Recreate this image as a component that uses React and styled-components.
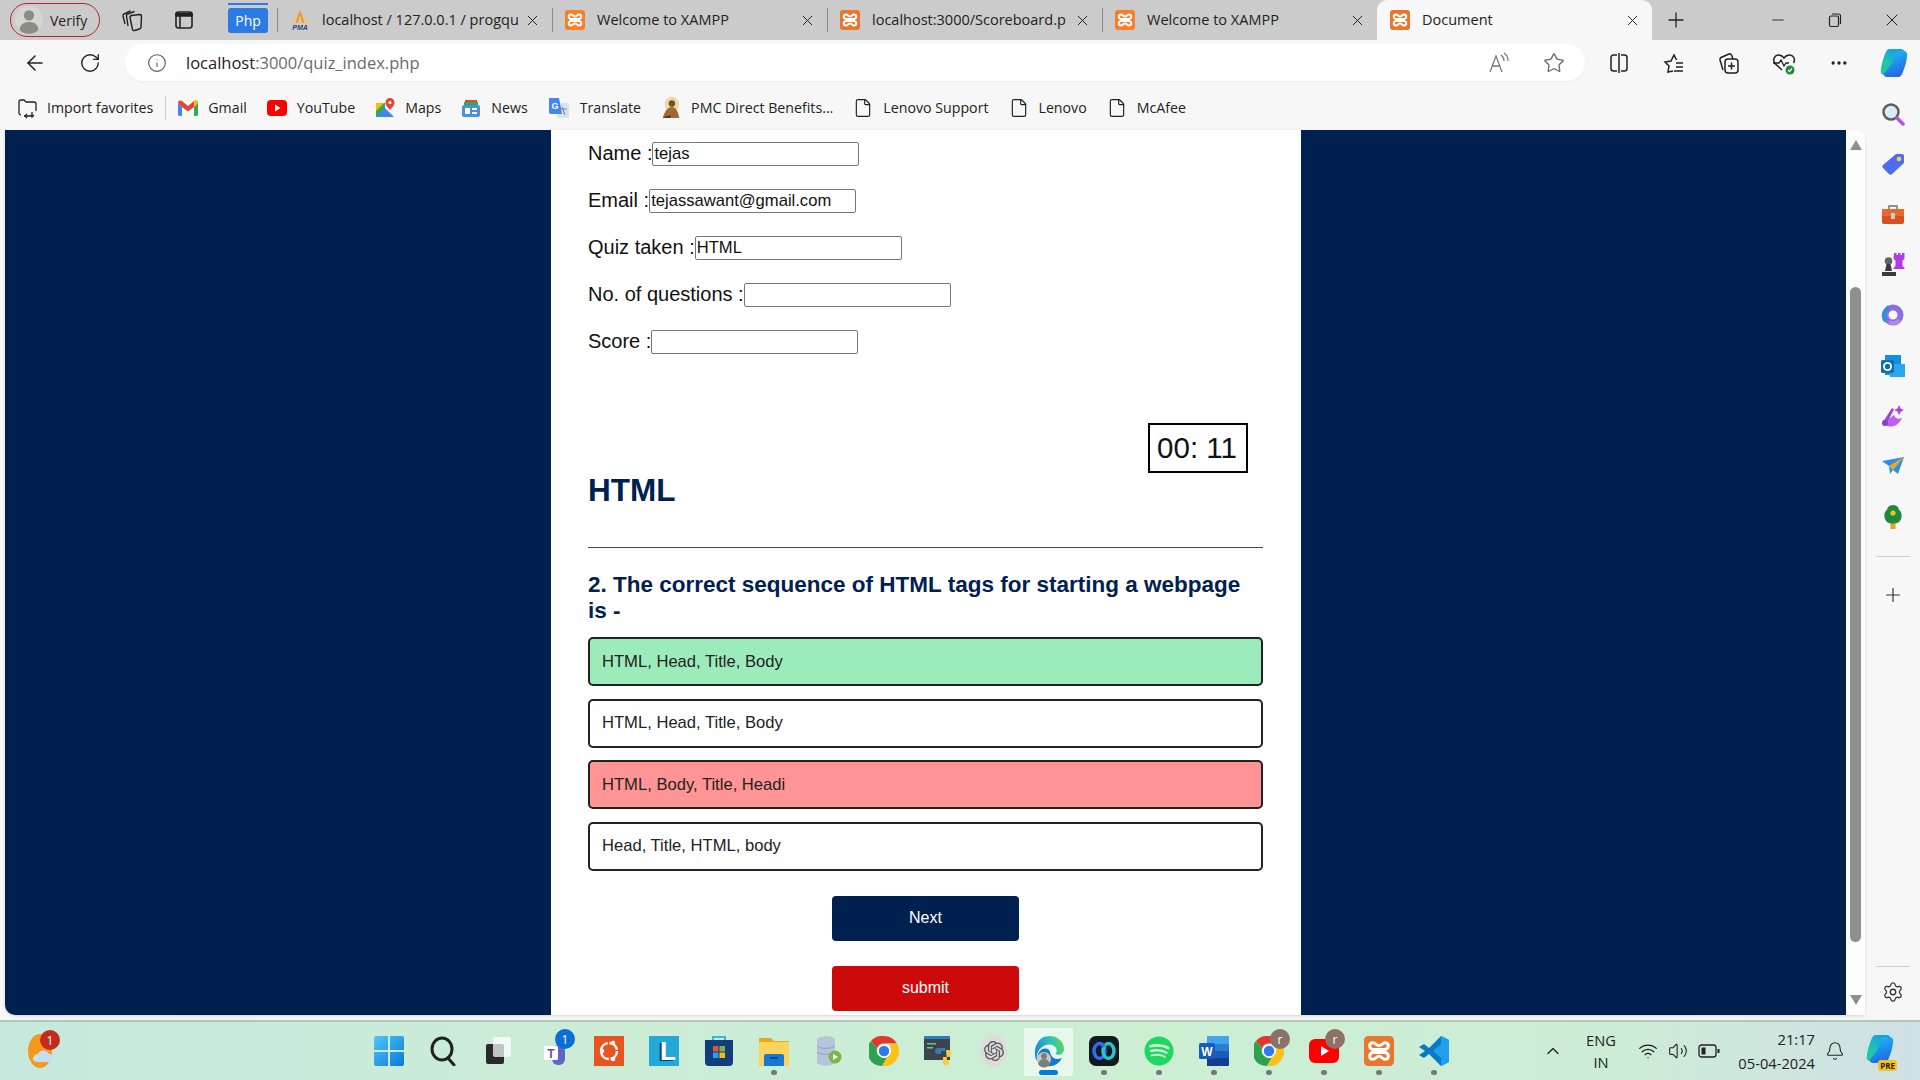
import React from 'react';
import styled, { createGlobalStyle } from 'styled-components';
import {
  ArrowLeft, RotateCw, Info, Star, X, Plus, Minus, Ellipsis, Settings, ChevronUp, Wifi, Volume2, Bell, File,
} from 'lucide-react';
import { SiOpenai } from 'react-icons/si';
import { FaSpotify } from 'react-icons/fa';

const NAVY = '#002050';

const GlobalStyle = createGlobalStyle`
  html, body { margin: 0; padding: 0; height: 100%; overflow: hidden; }
  * { box-sizing: border-box; }
  body { font-family: "Open Sans", "Liberation Sans", sans-serif; }
`;

const OpenAiDisc = styled.div`
  width: 26px;
  height: 32px;
  display: flex;
  align-items: center;
  justify-content: center;
  border-radius: 50%;
  background: #dcdcdc;
`;

/* ---------- little drawn icons ---------- */

const Xampp = ({ size = 20, dim }) => (
  <svg width={size} height={size} viewBox="0 0 20 20">
    <rect width="20" height="20" rx="3" fill={dim ? '#e8762c' : '#fb7d24'} />
    <path d="M6 4.500c-3 0-3 4 0 4.500h8c3-.5 3-4.500 0-4.500-2 0-2 2-4 2s-2-2-4-2zM6 15.500c-3 0-3-4 0-4.500h8c3 .5 3 4.500 0 4.500-2 0-2-2-4-2s-2 2-4 2z" fill="none" stroke="#fff" strokeWidth="2" />
  </svg>
);

const Pma = () => (
  <svg width="20" height="22" viewBox="0 0 20 22">
    <path d="M10 1 5 14h3l2-8 2 8h3z" fill="#f29a1f" />
    <path d="M3 14 7 6l-1 8zM17 14l-4-8 1 8z" fill="#f7c26b" />
    <text x="10" y="21" fontSize="7" fontWeight="700" fontStyle="italic" textAnchor="middle" fill="#2f3f7f" fontFamily="Liberation Sans">PMA</text>
  </svg>
);

const Profile = () => (
  <svg width="30" height="32" viewBox="0 0 32 32">
    <circle cx="16" cy="16" r="15" fill="#d6d6d0" />
    <circle cx="16" cy="11" r="5.500" fill="#8d8d88" />
    <path d="M6 27c0-7 5-9 10-9s10 2 10 9a15 15 0 0 1-20 0z" fill="#8d8d88" />
  </svg>
);

const Collections = () => (
  <svg width="24" height="24" viewBox="0 0 24 24" fill="none" stroke="#222" strokeWidth="1.400">
    <path d="M11 7.500 20 6.500a1.500 1.500 0 0 1 1.500 1.500l-.5 11a2 2 0 0 1-1.500 2l-5 1.500c-1 .3-1.700-.2-2-1l-2.500-12c-.2-1 .2-1.500 1-1.500z" />
    <path d="M8 18 6.500 8c-.2-1 .3-1.700 1-2l7-2.500" />
    <path d="M5 16 3 8c-.2-1 .2-1.700 1-2l6.500-3" />
  </svg>
);

const VerticalTabs = () => (
  <svg width="22" height="22" viewBox="0 0 22 22" fill="none" stroke="#222" strokeWidth="1.600">
    <rect x="3" y="3" width="16" height="16" rx="2.500" />
    <path d="M3 4.500h16V7H3z" fill="#222" />
    <path d="M7 7v12" />
  </svg>
);

const Restore = () => (
  <svg width="16" height="16" viewBox="0 0 16 16" fill="none" stroke="#222" strokeWidth="1.200">
    <rect x="2.500" y="4" width="9" height="10.500" rx="1.500" />
    <path d="M5 2h6.500A2 2 0 0 1 13.500 4v8" />
  </svg>
);

const ReadAloud = () => (
  <svg width="24" height="24" viewBox="0 0 24 24" fill="none" stroke="#7a7a7a" strokeWidth="1.300">
    <path d="M4 21 10 5l6 16M6.500 15h7" />
    <path d="M15 4c2 1.500 3 3.500 3 6M18 2c3 2 4 5 4 8" />
  </svg>
);

const SplitScreen = () => (
  <svg width="22" height="22" viewBox="0 0 22 22" fill="none" stroke="#222" strokeWidth="1.500">
    <path d="M9 3H5.500A2.500 2.500 0 0 0 3 5.500v11A2.500 2.500 0 0 0 5.500 19H9M13 3h3.500A2.500 2.500 0 0 1 19 5.500v11a2.500 2.500 0 0 1-2.500 2.500H13M11 1v20" />
  </svg>
);

const Favourites = () => (
  <svg width="24" height="24" viewBox="0 0 24 24" fill="none" stroke="#222" strokeWidth="1.500">
    <path d="M11 20 6 21l1-6-4-4 6-1 3-6 2.500 5" />
    <path d="M14 12h7M14 16h7M12 20h9" />
  </svg>
);

const CollectionsAdd = () => (
  <svg width="24" height="24" viewBox="0 0 24 24" fill="none" stroke="#222" strokeWidth="1.500">
    <rect x="8" y="8" width="13" height="14" rx="3" />
    <path d="M14.500 11.500v7M11 15h7M6 19 3 9c-.3-1 .2-2 1-2.500L12 3c1-.4 2 .2 2.500 1l1.500 4" />
  </svg>
);

const Health = () => (
  <svg width="24" height="24" viewBox="0 0 24 24">
    <path d="M10 19 3 12.500c-3-4 0-9 4-8.500 2 .3 4 1.500 5 3 1-1.500 3-2.700 5-3 4-.5 7 4 4.500 8" fill="none" stroke="#222" strokeWidth="1.500" />
    <path d="M1 12h6l2-3 3 6 2-3h3" fill="none" stroke="#222" strokeWidth="1.300" />
    <circle cx="18" cy="19" r="4.500" fill="#1a8a3b" />
    <path d="m16 19 1.500 1.500 2.500-3" stroke="#fff" fill="none" strokeWidth="1.200" />
  </svg>
);

const CopilotMark = ({ size = 30, id = 'cp' }) => (
  <svg width={size} height={size} viewBox="0 0 30 30">
    <defs>
      <linearGradient id={`${id}A`} x1="0.600" y1="0" x2="0.300" y2="1">
        <stop offset="0" stopColor="#1a9ee0" />
        <stop offset="0.600" stopColor="#1cc6b0" />
        <stop offset="1" stopColor="#27c88f" />
      </linearGradient>
      <linearGradient id={`${id}B`} x1="0.300" y1="0" x2="0.700" y2="1">
        <stop offset="0" stopColor="#2a5fe0" />
        <stop offset="0.500" stopColor="#1b8fee" />
        <stop offset="1" stopColor="#2bb5f5" />
      </linearGradient>
    </defs>
    <path d="M11 1h11c2 0 3 1 3.500 3L19 12c-2 3-4 8-5 12-.5 2-2 3-4 3H6c-3 0-5-2-4-5 0-5 3-14 5-18 .7-2 2-3 4-3z" fill={`url(#${id}A)`} />
    <path d="M11 1h11c2 0 3 1 3.500 3L19 12c-2 3-4 8-5 12-.5 2-2 3-4 3H6c-3 0-5-2-4-5 0-5 3-14 5-18 .7-2 2-3 4-3z" fill={`url(#${id}B)`} transform="rotate(180 15 15)" />
  </svg>
);

const ImportFav = () => (
  <svg width="22" height="22" viewBox="0 0 22 22" fill="none" stroke="#222" strokeWidth="1.300">
    <path d="M4 18c-1 0-2-1-2-2V5c0-1 1-2 2-2h3l2 2h8c1 0 2 1 2 2v7M13 19H7" />
    <path d="m10 17-2 2 2 2M15 15v5M13 18l2 2 2-2" />
  </svg>
);

const Gmail = () => (
  <svg width="20" height="16" viewBox="0 0 20 16">
    <path d="M0 3v11c0 1 .5 2 2 2h2V7z" fill="#4285f4" />
    <path d="M20 3v11c0 1-.5 2-2 2h-2V7z" fill="#34a853" />
    <path d="M0 3c0-3 3-3 4-2l6 5 6-5c1-1 4-1 4 2l-4 4-6 4.500L4 7z" fill="#ea4335" />
    <path d="M16 1c1-1 4-1 4 2l-4 4z" fill="#fbbc04" />
  </svg>
);

const YouTube = () => (
  <svg width="20" height="16" viewBox="0 0 20 16">
    <rect width="20" height="16" rx="4" fill="#f00" />
    <path d="m8 4.500 5.500 3.500L8 11.500z" fill="#fff" />
  </svg>
);

const Maps = () => (
  <svg width="20" height="20" viewBox="0 0 20 20">
    <path d="M1 5h9v14H1z" fill="#34a853" />
    <path d="M1 19 10 10l9 9z" fill="#4285f4" />
    <path d="M1 5h8L1 13z" fill="#fbbc04" />
    <path d="M15 0a4.500 4.500 0 0 1 4.500 4.500C19.500 8 15 12 15 12s-4.500-4-4.500-7.500A4.500 4.500 0 0 1 15 0z" fill="#ea4335" />
    <circle cx="15" cy="4.500" r="1.600" fill="#fff" />
  </svg>
);

const News = () => (
  <svg width="20" height="20" viewBox="0 0 20 20">
    <path d="M4 2h12v5H4z" fill="#ea4335" />
    <path d="M3 4h14v4H3z" fill="#34a853" />
    <rect x="1" y="7" width="18" height="12" rx="2" fill="#4a90e2" />
    <rect x="4" y="10" width="5" height="6" fill="#fff" />
    <rect x="11" y="10" width="5" height="2" fill="#fff" />
    <rect x="11" y="14" width="5" height="2" fill="#fff" />
  </svg>
);

const Translate = () => (
  <svg width="22" height="22" viewBox="0 0 22 22">
    <path d="M10 6h11v15H9z" fill="#dde3ea" />
    <path d="m14 10 3 8M19 12h-6" stroke="#7f8892" strokeWidth="1.200" fill="none" />
    <path d="M1 1h10l3 16H3c-1 0-2-1-2-2z" fill="#4285f4" />
    <text x="7" y="12" fontSize="9" fontWeight="700" textAnchor="middle" fill="#fff" fontFamily="Liberation Sans">G</text>
  </svg>
);

const Pmc = () => (
  <svg width="20" height="24" viewBox="0 0 22 24">
    <ellipse cx="12" cy="8" rx="8" ry="8" fill="#ecd9a8" />
    <circle cx="12" cy="7" r="3.500" fill="#7a4d24" />
    <path d="M2 23c2-8 6-12 10-12s7 5 8 12z" fill="#a06a32" />
    <path d="M2 23c3-2 6-3 9-3l-1 3z" fill="#5b3b1d" />
  </svg>
);

const Chrome = ({ size = 30 }) => (
  <svg width={size} height={size} viewBox="0 0 30 30">
    <path d="M15 0a15 15 0 0 1 13 7.500H15a7.500 7.500 0 0 0-7 5L2 5A15 15 0 0 1 15 0z" fill="#e4372c" />
    <path d="M2 5a15 15 0 0 0 11 25l5-8.500a7.500 7.500 0 0 1-10-9z" fill="#2fa04f" />
    <path d="M28 7.500A15 15 0 0 1 13 30l6-10a7.500 7.500 0 0 0 0-12.500z" fill="#fbc116" />
    <circle cx="15" cy="15" r="6" fill="#2f7be9" stroke="#fff" strokeWidth="1.500" />
  </svg>
);

const WindowsLogo = () => (
  <svg width="30" height="30" viewBox="0 0 30 30">
    <defs>
      <linearGradient id="winA" x1="0" y1="0" x2="1" y2="1">
        <stop offset="0" stopColor="#4fc8f8" />
        <stop offset="1" stopColor="#0a78d6" />
      </linearGradient>
    </defs>
    <path d="M2 0h12v14H0V2a2 2 0 0 1 2-2zM16 0h12a2 2 0 0 1 2 2v12H16zM0 16h14v14H2a2 2 0 0 1-2-2zM16 16h14v12a2 2 0 0 1-2 2H16z" fill="url(#winA)" />
  </svg>
);

const SearchGlyph = () => (
  <svg width="30" height="30" viewBox="0 0 30 30" fill="none" stroke="#222" strokeWidth="3">
    <ellipse cx="13" cy="13" rx="10" ry="11" />
    <path d="m19 22 6 7" strokeLinecap="round" />
  </svg>
);

const TaskView = () => (
  <svg width="30" height="30" viewBox="0 0 30 30">
    <rect x="2" y="8" width="18" height="20" rx="2" fill="#2a2a2a" />
    <rect x="9" y="1" width="18" height="20" rx="2" fill="#fff" opacity=".72" />
  </svg>
);

const Teams = () => (
  <svg width="30" height="30" viewBox="0 0 30 30">
    <rect x="13" y="9" width="13" height="20" rx="6" fill="#6264c8" />
    <circle cx="21" cy="6" r="4" fill="#7b83eb" />
    <rect x="5" y="10" width="14" height="14" rx="1.500" fill="#fff" />
    <text x="12" y="22" fontSize="12" fontWeight="700" textAnchor="middle" fill="#5558af" fontFamily="Liberation Sans">T</text>
  </svg>
);

const Ubuntu = () => (
  <svg width="30" height="30" viewBox="0 0 30 30">
    <rect width="30" height="30" fill="#e95420" />
    <circle cx="15" cy="15" r="8" fill="none" stroke="#fff" strokeWidth="2.400" strokeDasharray="11 1.600" />
    <circle cx="8" cy="15" r="2.200" fill="#fff" />
    <circle cx="19" cy="7" r="2.200" fill="#fff" />
    <circle cx="19" cy="23" r="2.200" fill="#fff" />
  </svg>
);

const LApp = () => (
  <svg width="30" height="30" viewBox="0 0 30 30">
    <rect width="30" height="30" fill="#22a9d8" />
    <text x="9" y="25" fontSize="26" fontWeight="700" fill="#0b3d74" fontFamily="Liberation Sans">L</text>
    <text x="11" y="24" fontSize="26" fontWeight="700" fill="#fff" fontFamily="Liberation Sans">L</text>
  </svg>
);

const Store = () => (
  <svg width="30" height="32" viewBox="0 0 30 32">
    <path d="M9 6V2h12v4" fill="none" stroke="#2fb8e8" strokeWidth="2" />
    <path d="M1 5h28v22a4 4 0 0 1-4 4H5a4 4 0 0 1-4-4z" fill="#123f7c" />
    <rect x="9" y="11" width="5.500" height="5.500" fill="#e8532a" />
    <rect x="15.500" y="11" width="5.500" height="5.500" fill="#7cb342" />
    <rect x="9" y="17.500" width="5.500" height="5.500" fill="#1fa4e8" />
    <rect x="15.500" y="17.500" width="5.500" height="5.500" fill="#fbbc04" />
  </svg>
);

const Folder = () => (
  <svg width="30" height="30" viewBox="0 0 30 30">
    <path d="M0 2h12l3 3h15v25H0z" fill="#e9a91e" />
    <path d="M0 6h30v24H0z" fill="#fcd45c" />
    <path d="M5 20a2 2 0 0 1 2-2h16a2 2 0 0 1 2 2v10H5z" fill="#1878d4" />
    <rect x="11" y="21" width="8" height="2" fill="#0a4a8c" />
  </svg>
);

const DbApp = () => (
  <svg width="28" height="30" viewBox="0 0 28 30">
    <path d="M2 4c0-5 18-5 18 0v22c0 5-18 5-18 0z" fill="#b7c5dc" />
    <path d="M2 10c3 3 15 3 18 0M2 16c3 3 15 3 18 0" stroke="#8e9fb9" fill="none" />
    <circle cx="20" cy="21" r="6.500" fill="#7ab648" />
    <path d="m18 18 5 3-5 3z" fill="#fff" />
  </svg>
);

const PythonApp = () => (
  <svg width="30" height="30" viewBox="0 0 30 30">
    <rect x="0" y="0" width="26" height="24" fill="#3a4550" />
    <rect x="0" y="0" width="26" height="3" fill="#2a7fbf" />
    <rect x="3" y="7" width="9" height="1.500" fill="#7ac28a" />
    <rect x="3" y="11" width="6" height="1.500" fill="#7ac28a" />
    <path d="M14 12h7v3h-4v3h-3a3 3 0 0 1 0-6z" fill="#3c7ab3" />
    <path d="M22 14h2a3 3 0 0 1 0 7h-5v5a3 3 0 0 0 6 1v-3h-2" fill="#f5cf3f" />
  </svg>
);

const EdgeLogo = () => (
  <svg width="30" height="32" viewBox="0 0 30 32">
    <defs>
      <linearGradient id="edgeA" x1="0" y1="0.600" x2="1" y2="0.300">
        <stop offset="0" stopColor="#1a86d8" />
        <stop offset="0.600" stopColor="#2fc4b8" />
        <stop offset="1" stopColor="#5fd65a" />
      </linearGradient>
    </defs>
    <path d="M15 0c9 0 15 6 15 13 0 5-5 7-9 5 2-1 2-4 1-6-2-4-9-5-14-1-4 3-7 9-4 15C-2 22 0 0 15 0z" fill="url(#edgeA)" />
    <path d="M4 18c3-7 11-7 12-2 1 5 5 9 12 6-3 6-9 9-15 8-6-1-11-6-9-12z" fill="#1478c9" />
    <circle cx="10" cy="23" r="7" fill="#c8c8c4" />
    <circle cx="10" cy="20" r="3" fill="#7f7f7a" />
    <path d="M4 28c1-4 4-5 6-5s5 1 6 5a7 7 0 0 1-12 0z" fill="#7f7f7a" />
  </svg>
);

const WaveApp = () => (
  <svg width="30" height="30" viewBox="0 0 30 30" fill="none" strokeWidth="3.500">
    <rect width="30" height="30" rx="7" fill="#14181f" />
    <ellipse cx="10.500" cy="15" rx="5.500" ry="7.500" stroke="#2f6cf5" />
    <ellipse cx="19.500" cy="15" rx="5.500" ry="7.500" stroke="#22c9c4" />
    <path d="M15 11c-1-2-2-3.500-4.500-3.500" stroke="#2f6cf5" />
  </svg>
);

const Word = () => (
  <svg width="30" height="30" viewBox="0 0 30 30">
    <path d="M8 0h21a1 1 0 0 1 1 1v7H8z" fill="#41a5ee" />
    <path d="M8 8h22v7H8z" fill="#2b7cd3" />
    <path d="M8 15h22v7H8z" fill="#185abd" />
    <path d="M8 22h22v7a1 1 0 0 1-1 1H8z" fill="#103f91" />
    <rect x="0" y="7" width="16" height="16" rx="1.500" fill="#1a5bbd" />
    <text x="8" y="19.500" fontSize="12" fontWeight="700" textAnchor="middle" fill="#fff" fontFamily="Liberation Sans">W</text>
  </svg>
);

const YtApp = () => (
  <svg width="30" height="30" viewBox="0 0 30 30">
    <rect y="3" width="30" height="24" rx="6" fill="#f00" />
    <path d="m12 10 8 5-8 5z" fill="#fff" />
  </svg>
);

const VsCode = () => (
  <svg width="30" height="30" viewBox="0 0 30 30">
    <path d="M22 0 30 4v22l-8 4L10 18l-5 4-5-3 6-4-6-4 5-3 5 4z" fill="#0a7ac4" />
    <path d="M22 0 30 4v22l-8 4zM22 8l-8 7 8 7z" fill="#1fa0ec" fillRule="evenodd" />
  </svg>
);

const CopilotPre = () => (
  <SmallStack>
    <CopilotMark size={30} id="cpTray" />
    <PreTag>PRE</PreTag>
  </SmallStack>
);

const Battery = () => (
  <svg width="22" height="16" viewBox="0 0 22 16" fill="none" stroke="#222" strokeWidth="1.300">
    <rect x="1" y="2" width="17" height="12" rx="2.500" />
    <path d="M20.500 6v4" strokeWidth="2" />
    <rect x="3.500" y="4.500" width="4" height="7" fill="#222" stroke="none" />
  </svg>
);

const Weather = () => (
  <svg width="30" height="40" viewBox="0 0 30 40">
    <ellipse cx="13" cy="20" rx="12" ry="17" fill="#f39a1c" />
    <path d="M6 28a5 5 0 0 1 5-5 6 6 0 0 1 11 0 4 4 0 0 1 1 8H10a4 4 0 0 1-4-3z" fill="#c8dcf2" />
  </svg>
);

const SideSearch = () => (
  <svg width="24" height="24" viewBox="0 0 24 24">
    <circle cx="10" cy="10" r="7.500" fill="#d6ecf8" stroke="#5e5e5e" strokeWidth="2.500" />
    <path d="m16 16 6 6" stroke="#c04fe0" strokeWidth="3.500" strokeLinecap="round" />
  </svg>
);

const SideTag = () => (
  <svg width="24" height="24" viewBox="0 0 24 24">
    <path d="M15 2h6a2 2 0 0 1 2 2v7L11 22a2 2 0 0 1-3 0l-6-6a2 2 0 0 1 0-3z" fill="#4f6cf0" />
    <circle cx="18" cy="7" r="2.300" fill="#f7d04a" />
  </svg>
);

const SideTools = () => (
  <svg width="24" height="24" viewBox="0 0 24 24">
    <path d="M8 7V3h8v4" fill="none" stroke="#8f8f8f" strokeWidth="1.800" />
    <rect x="1" y="6" width="22" height="15" rx="2" fill="#d4501e" />
    <rect x="1" y="6" width="22" height="7" fill="#e66a2c" />
    <rect x="10" y="10" width="4" height="6" fill="#ccc" />
  </svg>
);

const SideGames = () => (
  <svg width="24" height="24" viewBox="0 0 24 24">
    <path d="M13 0h2.500v2H17V0h2.500v2H21V0h2.500v6l-2 1.500V13l2 2v1h-11v-1l2-2V7.500l-2-1.500z" fill="#b23be6" />
    <circle cx="7.500" cy="8" r="3.800" fill="#666" />
    <path d="M5.500 11h4l1.500 7H4zM1 19h14v4H1z" fill="#3b3b3b" />
  </svg>
);

const SideM365 = () => (
  <svg width="24" height="24" viewBox="0 0 24 24" fill="none">
    <circle cx="12" cy="12" r="7.500" stroke="#8d6fe0" strokeWidth="6" />
    <path d="M5 18a8 8 0 0 1-1-10l4-4" stroke="#2f8fdc" strokeWidth="4" />
    <path d="M18 17a8 8 0 0 1-10 2" stroke="#b287e8" strokeWidth="4" />
    <circle cx="12" cy="12" r="3.500" fill="#f7f7f7" />
  </svg>
);

const SideOutlook = () => (
  <svg width="24" height="24" viewBox="0 0 24 24">
    <rect x="4" y="1" width="16" height="20" fill="#1490df" />
    <path d="M9 10h15v13H9z" fill="#28a8ea" />
    <rect x="0" y="6" width="13" height="13" rx="1.500" fill="#0f6cbd" />
    <circle cx="6.500" cy="12.500" r="3.600" fill="none" stroke="#fff" strokeWidth="1.800" />
  </svg>
);

const SideDrop = () => (
  <svg width="24" height="24" viewBox="0 0 24 24">
    <path d="M2 16c0 8 14 10 19-2-4 2-7 0-8-3l-4 3c-2 2-5 2-7 2z" fill="#c060f0" />
    <path d="M2 18 11 4l2 1.500-7 13z" fill="#9b45d8" />
    <path d="m18 1 1.500 3.500L23 6l-3 1.500L18 11l-1.500-3.500L13 6l3.500-1.500z" fill="#b23be6" />
    <circle cx="4" cy="19" r="3" fill="#8a3fd0" />
  </svg>
);

const SidePlane = () => (
  <svg width="24" height="24" viewBox="0 0 24 24">
    <path d="M1 7 23 3l-6 17-5-4-3 4-1-8z" fill="#2b8fe8" />
    <path d="M8 12 23 3l-11 13z" fill="#f2a524" />
  </svg>
);

const SideTree = () => (
  <svg width="24" height="24" viewBox="0 0 24 24">
    <rect x="9.500" y="17" width="5" height="7" fill="#eba21c" />
    <path d="M12 0c4 0 6 3 6 5 3 1 4 8 0 12-3 2-9 2-12 0-4-4-3-11 0-12 0-2 2-5 6-5z" fill="#1f8a3e" />
    <circle cx="12" cy="8" r="2.600" fill="#f2c21c" />
  </svg>
);

/* ---------- data ---------- */

const tabs = [
  { title: 'localhost / 127.0.0.1 / progqu', icon: <Pma /> },
  { title: 'Welcome to XAMPP', icon: <Xampp /> },
  { title: 'localhost:3000/Scoreboard.p', icon: <Xampp dim /> },
  { title: 'Welcome to XAMPP', icon: <Xampp /> },
  { title: 'Document', icon: <Xampp dim />, active: true },
];

const bookmarks = [
  { label: 'Gmail', icon: <Gmail /> },
  { label: 'YouTube', icon: <YouTube /> },
  { label: 'Maps', icon: <Maps /> },
  { label: 'News', icon: <News /> },
  { label: 'Translate', icon: <Translate /> },
  { label: 'PMC Direct Benefits...', icon: <Pmc /> },
  { label: 'Lenovo Support', icon: <File size={20} strokeWidth={1.400} color="#222" /> },
  { label: 'Lenovo', icon: <File size={20} strokeWidth={1.400} color="#222" /> },
  { label: 'McAfee', icon: <File size={20} strokeWidth={1.400} color="#222" /> },
];

const fields = [
  { label: 'Name :', value: 'tejas' },
  { label: 'Email :', value: 'tejassawant@gmail.com' },
  { label: 'Quiz taken :', value: 'HTML' },
  { label: 'No. of questions :', value: '' },
  { label: 'Score :', value: '' },
];

const options = [
  { text: 'HTML, Head, Title, Body', tone: '#9cecbb' },
  { text: 'HTML, Head, Title, Body', tone: '#fff' },
  { text: 'HTML, Body, Title, Headi', tone: '#ff9494' },
  { text: 'Head, Title, HTML, body', tone: '#fff' },
];

const sideItems = [<SideSearch />, <SideTag />, <SideTools />, <SideGames />, <SideM365 />, <SideOutlook />, <SideDrop />, <SidePlane />, <SideTree />];

const taskItems = [
  { icon: <WindowsLogo /> },
  { icon: <SearchGlyph /> },
  { icon: <TaskView /> },
  { icon: <Teams />, badge: '1', badgeTone: '#0a6fd4' },
  { icon: <Ubuntu /> },
  { icon: <LApp /> },
  { icon: <Store /> },
  { icon: <Folder />, dot: true },
  { icon: <DbApp /> },
  { icon: <Chrome /> },
  { icon: <PythonApp /> },
  { icon: <OpenAiDisc><SiOpenai size={20} color="#555" /></OpenAiDisc> },
  { icon: <EdgeLogo />, active: true },
  { icon: <WaveApp />, dot: true },
  { icon: <FaSpotify size={30} color="#1ed760" />, dot: true },
  { icon: <Word />, dot: true },
  { icon: <Chrome />, badge: 'r', badgeTone: '#8d7168', dot: true },
  { icon: <YtApp />, badge: 'r', badgeTone: '#8d7168', dot: true },
  { icon: <Xampp size={30} dim />, dot: true },
  { icon: <VsCode />, dot: true },
];

/* ---------- page ---------- */

const App = () => (
  <Screen>
    <GlobalStyle />
    <TabStrip>
      <ProfilePill>
        <Profile />
        <span>Verify</span>
      </ProfilePill>
      <StripButton $w={64}><Collections /></StripButton>
      <StripButton $w={40}><VerticalTabs /></StripButton>
      <PinnedTab>Php</PinnedTab>
      {tabs.map((tab, i) => (
        <Tab key={i} $active={tab.active}>
          <Favicon>{tab.icon}</Favicon>
          <TabTitle>{tab.title}</TabTitle>
          <X size={17} strokeWidth={1.400} color="#222" />
        </Tab>
      ))}
      <StripButton $w={48}><Plus size={24} strokeWidth={1.300} color="#222" /></StripButton>
      <WindowControls>
        <StripButton $w={57}><Minus size={18} strokeWidth={1.200} color="#222" /></StripButton>
        <StripButton $w={57}><Restore /></StripButton>
        <StripButton $w={57}><X size={20} strokeWidth={1.200} color="#222" /></StripButton>
      </WindowControls>
    </TabStrip>

    <Toolbar>
      <NavButton><ArrowLeft size={24} strokeWidth={1.500} color="#222" /></NavButton>
      <NavButton><RotateCw size={22} strokeWidth={1.500} color="#222" /></NavButton>
      <AddressBar>
        <Info size={20} strokeWidth={1.300} color="#555" />
        <Url>localhost<UrlRest>:3000/quiz_index.php</UrlRest></Url>
        <AddressAction><ReadAloud /></AddressAction>
        <AddressAction><Star size={22} strokeWidth={1.400} color="#666" /></AddressAction>
      </AddressBar>
      <ToolActions>
        <NavButton><SplitScreen /></NavButton>
        <NavButton><Favourites /></NavButton>
        <NavButton><CollectionsAdd /></NavButton>
        <NavButton><Health /></NavButton>
        <NavButton><Ellipsis size={20} strokeWidth={2} color="#222" /></NavButton>
        <NavButton><CopilotMark /></NavButton>
      </ToolActions>
    </Toolbar>

    <Middle>
      <ContentColumn>
        <BookmarkBar>
          <ImportItem>
            <ImportFav />
            <span>Import favorites</span>
          </ImportItem>
          {bookmarks.map(item => (
            <Bookmark key={item.label}>
              {item.icon}
              <span>{item.label}</span>
            </Bookmark>
          ))}
        </BookmarkBar>

        <Viewport>
          <Backdrop>
            <Panel>
              <InfoForm>
                {fields.map(field => (
                  <FieldRow key={field.label}>
                    <FieldLabel>{field.label}</FieldLabel>
                    <FieldInput readOnly value={field.value} />
                  </FieldRow>
                ))}
              </InfoForm>
              <Timer>00: 11</Timer>
              <QuizTitle>HTML</QuizTitle>
              <Rule />
              <Question>2. The correct sequence of HTML tags for starting a webpage is -</Question>
              <OptionList>
                {options.map((option, i) => (
                  <OptionItem key={i} $tone={option.tone}>{option.text}</OptionItem>
                ))}
              </OptionList>
              <ActionButton $tone={NAVY} $top={25}>Next</ActionButton>
              <ActionButton $tone="#cc0a0a" $top={25}>submit</ActionButton>
            </Panel>
          </Backdrop>
          <Scrollbar>
            <ScrollArrow />
            <ScrollThumb />
            <ScrollArrow $down />
          </Scrollbar>
        </Viewport>
      </ContentColumn>

      <Sidebar>
        {sideItems.map((icon, i) => (
          <SideButton key={i}>{icon}</SideButton>
        ))}
        <SideDivider />
        <SideButton $h={76}><Plus size={22} strokeWidth={1.300} color="#333" /></SideButton>
        <SideSpacer />
        <SideDivider />
        <SideButton $h={50}><Settings size={22} strokeWidth={1.400} color="#333" /></SideButton>
      </Sidebar>
    </Middle>

    <Taskbar>
      <WeatherSlot>
        <Weather />
        <CountBadge $tone="#c42b1c" $right={-2}>1</CountBadge>
      </WeatherSlot>
      <TaskIcons>
        {taskItems.map((item, i) => (
          <TaskSlot key={i} $active={item.active}>
            {item.icon}
            {item.badge && <CountBadge $tone={item.badgeTone} $right={6}>{item.badge}</CountBadge>}
            {item.dot && <RunDot />}
            {item.active && <ActiveBar />}
          </TaskSlot>
        ))}
      </TaskIcons>
      <Tray>
        <ChevronUp size={20} strokeWidth={1.600} color="#222" />
        <Lang>ENG<br />IN</Lang>
        <TrayIcons>
          <Wifi size={20} strokeWidth={1.500} color="#222" />
          <Volume2 size={20} strokeWidth={1.300} color="#222" />
          <Battery />
        </TrayIcons>
        <Clock>21:17<br />05-04-2024</Clock>
        <Bell size={20} strokeWidth={1.300} color="#222" />
        <CopilotPre />
      </Tray>
    </Taskbar>
  </Screen>
);

export default App;

const Screen = styled.div`
  width: 1920px;
  height: 1080px;
  display: flex;
  flex-direction: column;
  background: #f7f7f7;
  overflow: hidden;
`;

const TabStrip = styled.div`
  height: 40px;
  flex-shrink: 0;
  display: flex;
  align-items: center;
  padding-left: 10px;
  background: #cbcbcb;
`;

const ProfilePill = styled.div`
  width: 90px;
  height: 34px;
  flex-shrink: 0;
  display: flex;
  align-items: center;
  gap: 6px;
  padding-left: 3px;
  border: 1.500px solid #b0282c;
  border-radius: 17px;
  font-size: 14px;
  color: #222;
`;

const StripButton = styled.div`
  width: ${p => p.$w}px;
  height: 40px;
  flex-shrink: 0;
  display: flex;
  align-items: center;
  justify-content: center;
`;

const PinnedTab = styled.div`
  width: 40px;
  height: 25px;
  margin: 0 9px 0 24px;
  flex-shrink: 0;
  position: relative;
  display: flex;
  align-items: center;
  justify-content: center;
  background: #2b7ae4;
  border-radius: 3px;
  color: #fff;
  font-size: 14px;

  &::before {
    content: '';
    position: absolute;
    left: 0;
    right: 0;
    top: -5px;
    height: 2px;
    background: #2b7ae4;
  }
`;

const Tab = styled.div`
  width: 275px;
  height: 40px;
  flex-shrink: 0;
  display: flex;
  align-items: center;
  padding: 0 11px 0 13px;
  position: relative;
  background: ${p => (p.$active ? '#f7f7f7' : 'transparent')};
  border-radius: ${p => (p.$active ? '10px 10px 0 0' : '0')};

  & > svg {
    flex-shrink: 0;
  }

  &::before {
    content: '';
    display: ${p => (p.$active ? 'none' : 'block')};
    position: absolute;
    left: 0;
    top: 8px;
    width: 1px;
    height: 24px;
    background: #8c8c8c;
  }
`;

const Favicon = styled.div`
  width: 20px;
  height: 22px;
  flex-shrink: 0;
  display: flex;
  align-items: center;
  justify-content: center;
`;

const TabTitle = styled.div`
  flex: 1;
  min-width: 0;
  margin: 0 2px 2px 12px;
  white-space: nowrap;
  font-size: 14.500px;
  color: #222;
`;

const WindowControls = styled.div`
  margin-left: auto;
  display: flex;
`;

const Toolbar = styled.div`
  height: 45px;
  flex-shrink: 0;
  display: flex;
  align-items: center;
  padding: 0 0 0 7px;
`;

const NavButton = styled.div`
  width: 55px;
  height: 38px;
  flex-shrink: 0;
  display: flex;
  align-items: center;
  justify-content: center;
`;

const AddressBar = styled.div`
  width: 1460px;
  height: 37px;
  margin-left: 8px;
  flex-shrink: 0;
  display: flex;
  align-items: center;
  padding-left: 22px;
  background: #fff;
  border-radius: 18px;
  box-shadow: 0 1px 2px rgba(0, 0, 0, 0.05);
`;

const Url = styled.div`
  flex: 1;
  margin-left: 19px;
  font-size: 16.500px;
  color: #222;
`;

const UrlRest = styled.span`
  color: #6a6a6a;
`;

const AddressAction = styled.div`
  width: 50px;
  display: flex;
  justify-content: center;
  margin-right: 6px;
`;

const ToolActions = styled.div`
  display: flex;
  margin-left: 6px;
`;

const Middle = styled.div`
  flex: 1;
  min-height: 0;
  display: flex;
`;

const ContentColumn = styled.div`
  flex: 1;
  min-width: 0;
  display: flex;
  flex-direction: column;
`;

const BookmarkBar = styled.div`
  height: 45px;
  flex-shrink: 0;
  display: flex;
  align-items: center;
  padding-left: 17px;
  font-size: 14.200px;
  color: #222;
`;

const ImportItem = styled.div`
  display: flex;
  align-items: center;
  gap: 8px;
  padding-right: 12px;
  margin-right: 12px;
  border-right: 1px solid #c8c8c8;
  height: 24px;
`;

const Bookmark = styled.div`
  display: flex;
  align-items: center;
  gap: 10px;
  margin-right: 20px;
  white-space: nowrap;
`;

const Viewport = styled.div`
  height: 885px;
  margin-left: 5px;
  display: flex;
  background: #fff;
  border-radius: 0 10px 0 10px;
  box-shadow: 0 1px 3px rgba(0, 0, 0, 0.14);
  overflow: hidden;
`;

const Backdrop = styled.div`
  flex: 1;
  display: flex;
  justify-content: center;
  padding-left: 1px;
  background: ${NAVY};
  overflow: hidden;
`;

const Panel = styled.div`
  width: 750px;
  flex-shrink: 0;
  padding: 0 38px 0 37px;
  background: #fff;
  font-family: "Liberation Sans", Arial, sans-serif;
`;

const InfoForm = styled.div`
  padding-top: 12px;
  display: flex;
  flex-direction: column;
  gap: 23px;
`;

const FieldRow = styled.label`
  height: 24px;
  display: flex;
  align-items: center;
`;

const FieldLabel = styled.span`
  margin-top: -2px;
  font-size: 20px;
  color: #111;
`;

const FieldInput = styled.input`
  width: 207px;
  height: 24px;
  padding: 0 1px;
  border: 1px solid #767676;
  border-radius: 2px;
  font-family: inherit;
  font-size: 16.600px;
  color: #111;
  outline: none;
`;

const Timer = styled.div`
  width: 100px;
  height: 50px;
  margin: 69px 15px 0 auto;
  display: flex;
  align-items: center;
  justify-content: center;
  padding-right: 2px;
  border: 2px solid #000;
  font-size: 29.500px;
  color: #111;
`;

const QuizTitle = styled.h1`
  margin: -1px 0 0;
  font-size: 31.500px;
  line-height: 36px;
  color: ${NAVY};
`;

const Rule = styled.hr`
  margin: 39px 0 0;
  border: none;
  border-top: 1px solid #444;
`;

const Question = styled.h2`
  margin: 24px 0 0;
  font-size: 22.500px;
  line-height: 26px;
  color: ${NAVY};
`;

const OptionList = styled.div`
  margin-top: 13px;
  display: flex;
  flex-direction: column;
  gap: 12.500px;
`;

const OptionItem = styled.div`
  height: 49px;
  display: flex;
  align-items: center;
  padding: 0 0 0 12px;
  background: ${p => p.$tone};
  border: 2.500px solid #222;
  border-radius: 5px;
  font-size: 16.600px;
  color: #222;
`;

const ActionButton = styled.div`
  width: 187px;
  height: 45px;
  margin: ${p => p.$top}px auto 0;
  display: flex;
  align-items: center;
  justify-content: center;
  background: ${p => p.$tone};
  border-radius: 4px;
  color: #fff;
  font-size: 16px;
`;

const Scrollbar = styled.div`
  width: 19px;
  flex-shrink: 0;
  display: flex;
  flex-direction: column;
  align-items: center;
  padding: 10px 0 0;
  background: #fdfdfd;
`;

const ScrollArrow = styled.div`
  width: 0;
  height: 0;
  border-left: 6.500px solid transparent;
  border-right: 6.500px solid transparent;
  ${p => (p.$down ? 'border-top: 10px solid #8f8f8f; margin-top: 53px;' : 'border-bottom: 10px solid #8f8f8f;')}
`;

const ScrollThumb = styled.div`
  width: 11px;
  height: 655px;
  margin-top: 137px;
  background: #8f8f8f;
  border-radius: 6px;
`;

const Sidebar = styled.div`
  width: 55px;
  flex-shrink: 0;
  display: flex;
  flex-direction: column;
  align-items: center;
  padding: 4px 0 3px;
`;

const SideButton = styled.div`
  height: ${p => p.$h || 50.300}px;
  display: flex;
  align-items: center;
  justify-content: center;
  flex-shrink: 0;
`;

const SideDivider = styled.div`
  width: 34px;
  height: 1px;
  margin-top: 14px;
  background: #cfcfcf;
  flex-shrink: 0;
`;

const SideSpacer = styled.div`
  flex: 1;
`;

const Taskbar = styled.div`
  height: 60px;
  flex-shrink: 0;
  display: flex;
  align-items: center;
  border-top: 2px solid #b4c6b8;
  background: linear-gradient(90deg, #c6e9de 0%, #ccecd6 30%, #ccefd4 60%, #cdecd6 85%, #cfe0e6 100%);
`;

const WeatherSlot = styled.div`
  width: 361px;
  height: 58px;
  flex-shrink: 0;
  padding: 9px 0 0 27px;
  position: relative;

  & > div {
    left: 40px;
    right: auto;
    top: 8px;
  }
`;

const TaskIcons = styled.div`
  display: flex;
`;

const TaskSlot = styled.div`
  width: 55px;
  height: 58px;
  flex-shrink: 0;
  position: relative;
  display: flex;
  align-items: center;
  justify-content: center;
  ${p => p.$active && `
    background: rgba(255, 255, 255, 0.55);
    background-clip: content-box;
    padding: 6px 3px 4px;
    border-radius: 6px;
  `}
`;

const CountBadge = styled.div`
  position: absolute;
  top: 7px;
  right: ${p => p.$right}px;
  width: 20px;
  height: 20px;
  display: flex;
  align-items: center;
  justify-content: center;
  border-radius: 50%;
  background: ${p => p.$tone};
  color: #fff;
  font-size: 12px;
`;

const RunDot = styled.div`
  position: absolute;
  bottom: 5px;
  left: 25px;
  width: 6px;
  height: 5px;
  border-radius: 3px;
  background: #6f7b76;
`;

const ActiveBar = styled.div`
  position: absolute;
  bottom: 5px;
  left: 18px;
  width: 19px;
  height: 5px;
  border-radius: 3px;
  background: #0a78d6;
`;

const Tray = styled.div`
  flex: 1;
  height: 58px;
  display: flex;
  align-items: center;
  padding-left: 82px;
  font-size: 14.700px;
  color: #222;
`;

const Lang = styled.div`
  width: 40px;
  margin-left: 18px;
  text-align: center;
  line-height: 22px;
`;

const TrayIcons = styled.div`
  display: flex;
  align-items: center;
  gap: 10px;
  margin-left: 17px;
`;

const Clock = styled.div`
  width: 92px;
  margin: 0 10px 0 3px;
  text-align: right;
  white-space: nowrap;
  line-height: 24px;
`;

const SmallStack = styled.div`
  position: relative;
  margin-left: 20px;
  width: 30px;
  height: 34px;
`;

const PreTag = styled.div`
  position: absolute;
  bottom: -3px;
  right: -2px;
  padding: 0 2px;
  border-radius: 3px;
  background: #f7c21c;
  color: #222;
  font-size: 8px;
  font-weight: 700;
  line-height: 11px;
`;
